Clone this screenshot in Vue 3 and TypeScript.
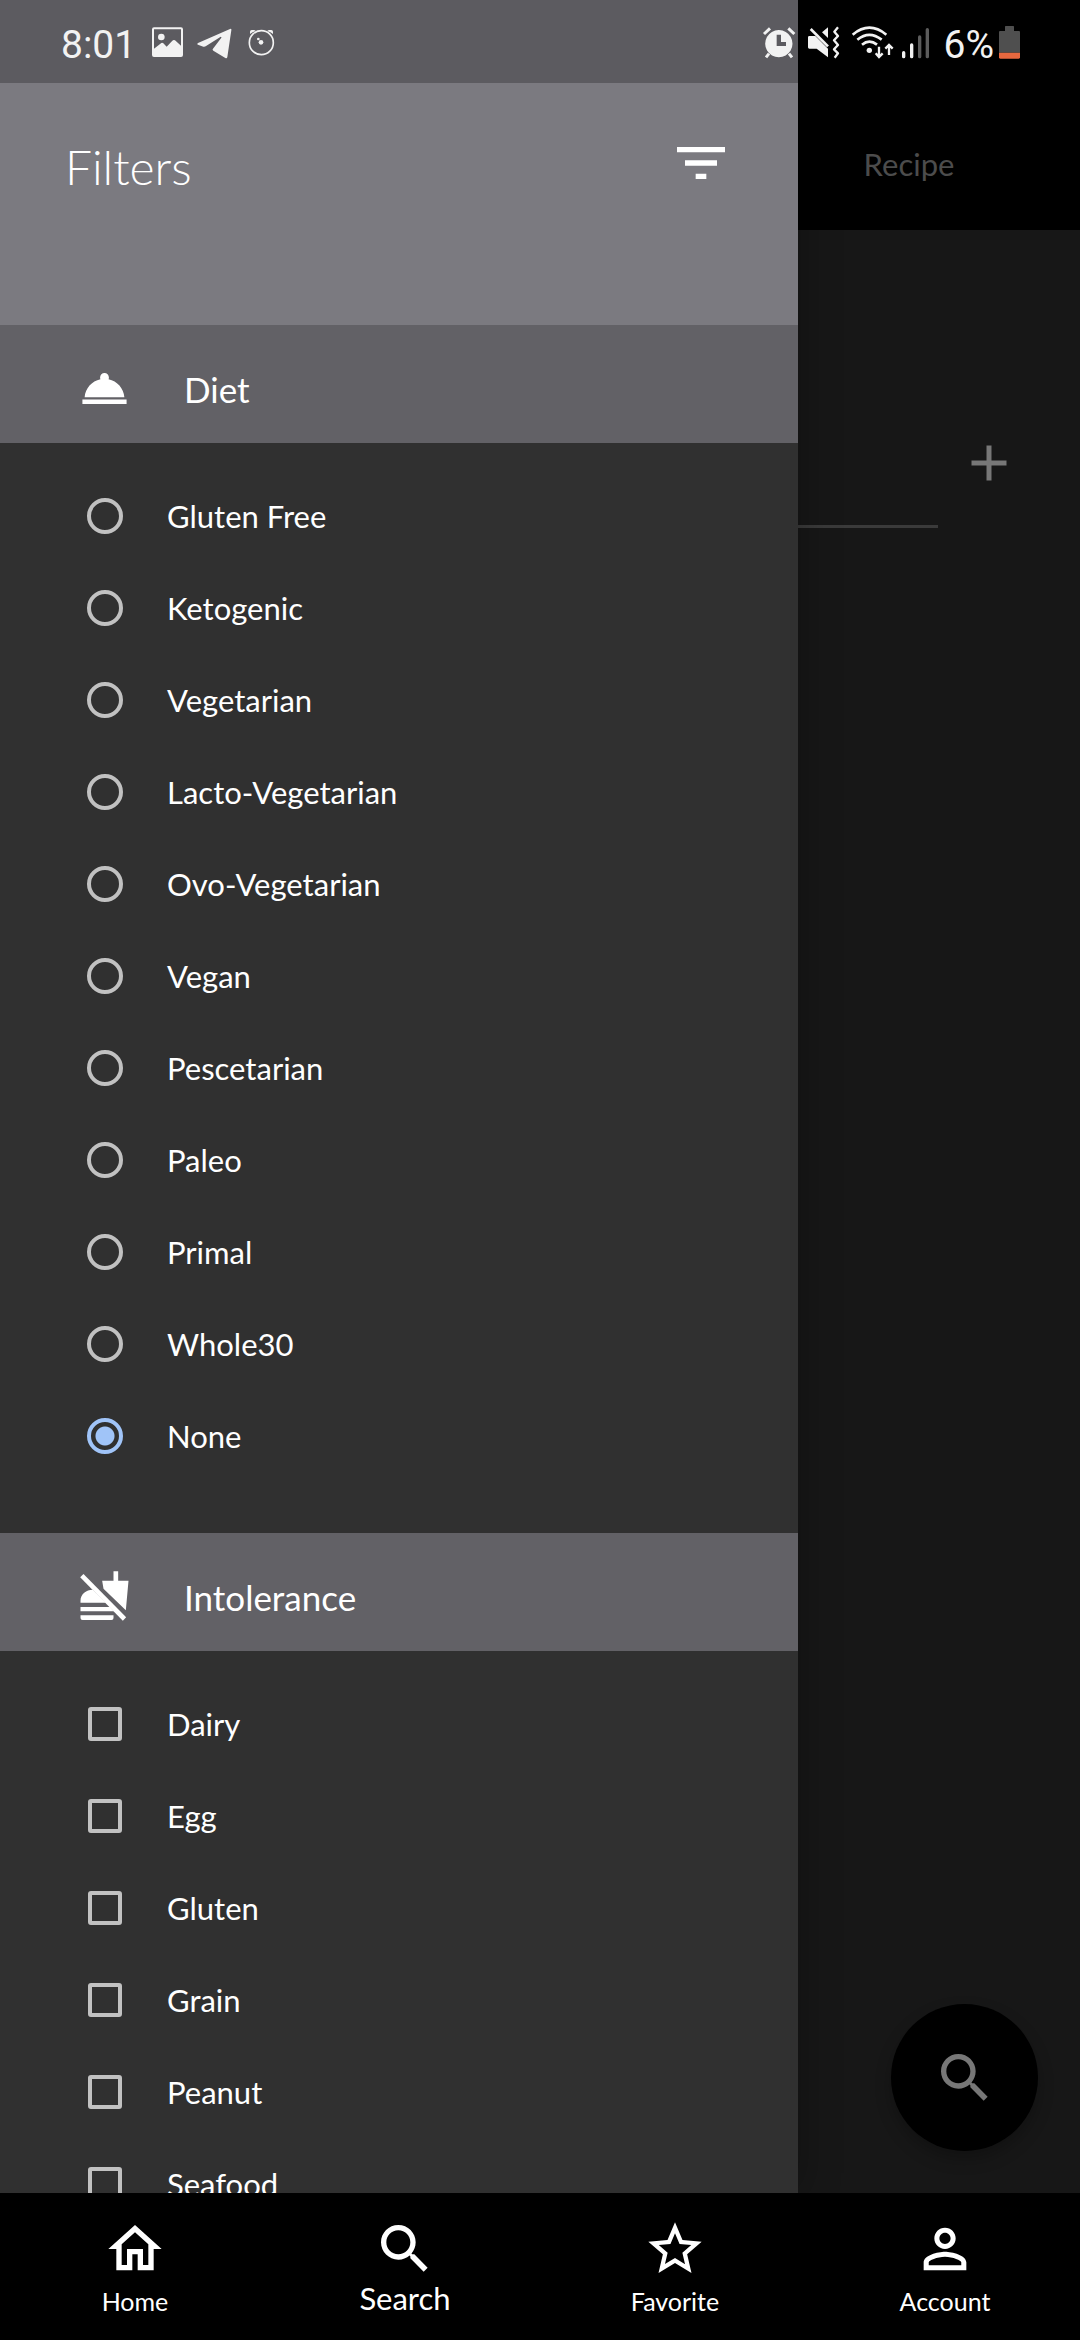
<script setup lang="ts">
import { ref } from 'vue'

interface Tab {
  label: string
  path: string
}

const diets: string[] = [
  'Gluten Free',
  'Ketogenic',
  'Vegetarian',
  'Lacto-Vegetarian',
  'Ovo-Vegetarian',
  'Vegan',
  'Pescetarian',
  'Paleo',
  'Primal',
  'Whole30',
  'None',
]
const intolerances: string[] = ['Dairy', 'Egg', 'Gluten', 'Grain', 'Peanut', 'Seafood']

const searchPath =
  'M15.5 14h-.79l-.28-.27C15.41 12.59 16 11.11 16 9.5 16 5.91 13.09 3 9.5 3S3 5.91 3 9.5 5.91 16 9.5 16c1.61 0 3.09-.59 4.23-1.57l.27.28v.79l5 4.99L20.49 19l-4.99-5zm-6 0C7.01 14 5 11.99 5 9.5S7.01 5 9.5 5 14 7.01 14 9.5 11.99 14 9.5 14z'

const tabs: Tab[] = [
  {
    label: 'Home',
    path: 'M12 5.69l5 4.5V18h-2v-6H9v6H7v-7.81l5-4.5M12 3L2 12h3v8h6v-6h2v6h6v-8h3L12 3z',
  },
  { label: 'Search', path: searchPath },
  {
    label: 'Favorite',
    path: 'M22 9.24l-7.19-.62L12 2 9.19 8.63 2 9.24l5.46 4.73L5.82 21 12 17.27 18.18 21l-1.63-7.03L22 9.24zM12 15.4l-3.76 2.27 1-4.28-3.32-2.88 4.38-.38L12 6.1l1.71 4.04 4.38.38-3.32 2.88 1 4.28L12 15.4z',
  },
  {
    label: 'Account',
    path: 'M12 5.9c1.16 0 2.1.94 2.1 2.1s-.94 2.1-2.1 2.1S9.9 9.16 9.9 8s.94-2.1 2.1-2.1m0 9c2.97 0 6.1 1.46 6.1 2.1v1.1H5.9V17c0-.64 3.13-2.1 6.1-2.1M12 4C9.79 4 8 5.79 8 8s1.79 4 4 4 4-1.79 4-4-1.79-4-4-4zm0 9c-2.67 0-8 1.34-8 4v3h16v-3c0-2.66-5.33-4-8-4z',
  },
]

const diet = ref('None')
const avoided = ref<string[]>([])
const activeTab = ref('Search')
</script>

<template>
  <div class="screen">
    <div class="status">
      <div class="status-side">
        <span class="status-text clock">8:01</span>
        <svg width="31" height="34" viewBox="456 78 93 102" aria-hidden="true">
          <path fill-rule="evenodd" d="M462 82h81q6 0 6 6v77q0 6-6 6h-81q-6 0-6-6V88q0-6 6-6zm0 6v58l22-17q3-2 6 1l10 10 17-18q4-4 8-1l18 16V88z" />
          <circle cx="484" cy="111" r="10" />
        </svg>
        <svg width="37" height="34" viewBox="591 78 111 102" aria-hidden="true">
          <path d="M690 87q5-2 4 4l-12 80q-1 6-6 3l-36-22q-4-3-1-6l25-33q1-4-3-2l-44 28q-3 2-7 1l-16-6q-4-2 0-5z" />
        </svg>
        <svg width="27" height="34" viewBox="744 78 81 102" aria-hidden="true">
          <circle cx="784" cy="128" r="36" fill="none" stroke="#f2f2f2" stroke-width="5" />
          <path d="M750 102v-7q0-5 5-5h6q4 0 6 3-10 3-17 9zM819 102v-7q0-5-5-5h-6q-4 0-6 3 10 3 17 9z" />
          <circle cx="783" cy="127" r="7" />
          <circle cx="775" cy="117" r="4" />
        </svg>
      </div>
      <div class="status-side">
        <svg width="37" height="34" viewBox="363 78 111 102" aria-hidden="true">
          <path fill-rule="evenodd" d="M414 90a41 41 0 1 1-1 0zm-7 14v34h28v-12h-15v-22z" />
          <path d="M369 102l18-17M460 102l-18-17M384 161l-9 11M444 161l9 11" fill="none" stroke="#f2f2f2" stroke-width="9" />
        </svg>
        <svg width="36" height="34" viewBox="498 78 108 102" aria-hidden="true">
          <path d="M505 108h18l38 38v26l-34-26h-22q-4 0-4-4v-30q0-4 4-4zM543 97l18-15v32z" />
          <path d="M509 87l52 52" stroke="#f2f2f2" stroke-width="8" />
          <path d="M591 82l-11 13 11 13-12 13 12 14-12 13 12 12-10 13" fill="none" stroke="#f2f2f2" stroke-width="7" stroke-linejoin="round" />
        </svg>
        <svg width="43" height="34" viewBox="630 78 129 102" aria-hidden="true">
          <path d="M635 104q50-42 101 0M649 119q36-29 73 0M663 134q22-18 45 0" fill="none" stroke="#f2f2f2" stroke-width="8" />
          <circle cx="685" cy="151" r="8" />
          <path d="M714 140v30M704 160l10 11 11-11M744 165v-30M733 146l11-11 11 11" fill="none" stroke="#f2f2f2" stroke-width="7" />
        </svg>
        <svg width="28" height="34" viewBox="783 78 84 102" aria-hidden="true">
          <path d="M788 158v12M812 135v35" stroke="#f2f2f2" stroke-width="10" stroke-linecap="round" />
          <path d="M836 111v59M859 89v81" stroke="#5c5c5c" stroke-width="10" stroke-linecap="round" />
        </svg>
        <div class="battery">
          <span class="status-text">6%</span>
          <svg width="22" height="34" viewBox="1071 78 66 102" aria-hidden="true">
            <path fill="#4f4f4f" d="M1092 80q0-2 2-2h23q2 0 2 2v13h15q3 0 3 3v62h-63V96q0-3 3-3h15z" />
            <path fill="#e8683f" d="M1074 158h63v14q0 4-4 4h-55q-4 0-4-4z" />
          </svg>
        </div>
      </div>
    </div>

    <div class="content">
      <aside class="drawer">
        <header class="drawer-head">
          <h1 class="title">Filters</h1>
          <button type="button" aria-label="Apply filters">
            <svg width="64" height="64" viewBox="0 0 24 24"><path d="M10 18h4v-2h-4v2zM3 6v2h18V6H3zm3 7h12v-2H6v2z" /></svg>
          </button>
        </header>

        <div class="drawer-body">
          <section>
            <h2 class="section-head">
              <svg width="53" height="53" viewBox="0 0 24 24" aria-hidden="true">
                <path d="M2 17h20v2H2zm11.84-9.21c.1-.24.16-.51.16-.79 0-1.1-.9-2-2-2s-2 .9-2 2c0 .28.06.55.16.79C6.25 8.6 3.27 11.93 3 16h18c-.27-4.07-3.25-7.4-7.16-8.21z" />
              </svg>
              Diet
            </h2>
            <div class="options">
              <label v-for="name in diets" :key="name" class="option">
                <input v-model="diet" class="radio" type="radio" name="diet" :value="name" />
                <span>{{ name }}</span>
              </label>
            </div>
          </section>

          <section>
            <h2 class="section-head">
              <svg width="53" height="53" viewBox="235.5 540 159 159" aria-hidden="true">
                <path d="M247 557L375 687" stroke="#fff" stroke-width="14" />
                <path d="M342 544h14v28h31l-8 89-67-65-4-24h34z" />
                <path d="M243 638v-6c0-20 18-33 36-33l40 39zM243 651h88l12 13H243zM243 676h99v8q0 6-6 6h-87q-6 0-6-6z" />
              </svg>
              Intolerance
            </h2>
            <div class="options">
              <label v-for="name in intolerances" :key="name" class="option">
                <input v-model="avoided" class="check" type="checkbox" :value="name" />
                <span>{{ name }}</span>
              </label>
            </div>
          </section>
        </div>
      </aside>

      <main class="page">
        <div class="page-tabs">
          <a class="page-tab" href="#recipe">Recipe</a>
        </div>
        <div class="entry">
          <span class="entry-line"></span>
          <button class="add" type="button" aria-label="Add">
            <svg width="60" height="60" viewBox="0 0 24 24"><path d="M19 13h-6v6h-2v-6H5v-2h6V5h2v6h6v2z" /></svg>
          </button>
        </div>
        <button class="fab" type="button" aria-label="Search recipes">
          <svg width="64" height="64" viewBox="0 0 24 24"><path :d="searchPath" /></svg>
        </button>
      </main>
    </div>

    <nav class="tabbar">
      <button
        v-for="tab in tabs"
        :key="tab.label"
        class="tab"
        :class="{ active: tab.label === activeTab }"
        type="button"
        @click="activeTab = tab.label"
      >
        <svg width="64" height="64" viewBox="0 0 24 24" aria-hidden="true"><path :d="tab.path" /></svg>
        <span class="tab-label">{{ tab.label }}</span>
      </button>
    </nav>
  </div>
</template>

<style>
body {
  margin: 0;
  background: #000;
}
</style>

<style scoped>
.screen {
  position: relative;
  display: flex;
  flex-direction: column;
  height: 100vh;
  overflow: hidden;
  background: #000;
  color: #fff;
  font-family: Lato, sans-serif;
}

svg {
  display: block;
  flex: none;
  fill: currentColor;
}

button {
  padding: 0;
  border: 0;
  background: none;
  color: inherit;
  font: inherit;
}

/* The system bar floats over both the drawer and the page. */
.status {
  position: absolute;
  inset: 0 0 auto;
  z-index: 2;
  display: flex;
  justify-content: space-between;
  box-sizing: border-box;
  height: 83px;
  padding: 3px 60px 0 61px;
  color: #f2f2f2;
}

.status-side {
  display: flex;
  align-items: center;
  gap: 8px;
}

.status-side:first-child {
  gap: 14px;
}

.status-text {
  padding-top: 3px;
  font-family: Roboto, sans-serif;
  font-size: 39px;
  line-height: 48px;
}

.clock {
  padding-right: 2px;
}

.battery {
  display: flex;
  align-items: center;
  gap: 4px;
  padding-left: 6px;
}

.content {
  flex: 1;
  display: grid;
  grid-template-columns: 133fr 47fr;
  grid-template-rows: minmax(0, 1fr);
  min-height: 0;
}

.drawer {
  z-index: 1;
  display: flex;
  flex-direction: column;
  min-width: 0;
  background: #303030;
  box-shadow: 0 0 40px rgba(0, 0, 0, 0.3);
}

.drawer-head {
  display: flex;
  justify-content: space-between;
  align-items: flex-start;
  box-sizing: border-box;
  height: 325px;
  padding: 48px 65px 0;
  border-top: 83px solid #5c5b60;
  background: #7b7a80;
}

.title {
  margin: 0;
  font-size: 48px;
  font-weight: 300;
  line-height: 72px;
}

.drawer-body {
  flex: 1;
  min-height: 0;
  overflow-y: auto;
  scrollbar-width: none;
}

.section-head {
  display: flex;
  align-items: center;
  gap: 53px;
  box-sizing: border-box;
  height: 118px;
  margin: 0;
  padding: 9px 78px 0;
  background: #626166;
  font-size: 35px;
  font-weight: 400;
  line-height: 40px;
}

.options {
  padding: 27px 0 51px;
}

.option {
  display: flex;
  align-items: center;
  gap: 44px;
  height: 92px;
  padding: 0 87px;
  font-size: 31px;
}

.radio,
.check {
  appearance: none;
  flex: none;
  box-sizing: border-box;
  width: 36px;
  height: 36px;
  margin: 0;
  border: 4px solid #c1c1c1;
  border-radius: 50%;
}

.radio:checked {
  border-color: #a0c4f8;
  background: radial-gradient(circle, #a0c4f8 9px, transparent 10px);
}

.check {
  width: 34px;
  height: 34px;
  margin: 0 1px;
  border-radius: 3px;
}

.check:checked {
  border-color: #a0c4f8;
  background: #a0c4f8;
}

.page {
  display: flex;
  flex-direction: column;
  min-width: 0;
  background: #171717;
}

.page-tabs {
  display: flex;
  justify-content: center;
  box-sizing: border-box;
  height: 230px;
  padding: 144px 60px 0 0;
  background: #000;
}

.page-tab {
  color: #4c4c4c;
  font-size: 31px;
  line-height: 40px;
  text-decoration: none;
}

.entry {
  display: flex;
  align-items: flex-start;
  gap: 21px;
  padding: 203px 61px 0 0;
}

.entry-line {
  flex: 1;
  height: 3px;
  margin-top: 92px;
  background: #3a3a3a;
}

.add {
  color: #777;
}

.fab {
  display: grid;
  place-items: center;
  width: 147px;
  height: 147px;
  margin: auto 42px 42px auto;
  border-radius: 50%;
  background: #000;
  box-shadow: 0 8px 16px rgba(0, 0, 0, 0.25);
  color: #777;
}

.tabbar {
  display: grid;
  grid-template-columns: repeat(4, 1fr);
  height: 147px;
  background: #000;
}

.tab {
  display: flex;
  flex-direction: column;
  align-items: center;
  padding-top: 24px;
}

.tab-label {
  font-size: 25px;
  line-height: 40px;
}

.active .tab-label {
  font-size: 31px;
  line-height: 34px;
}
</style>
